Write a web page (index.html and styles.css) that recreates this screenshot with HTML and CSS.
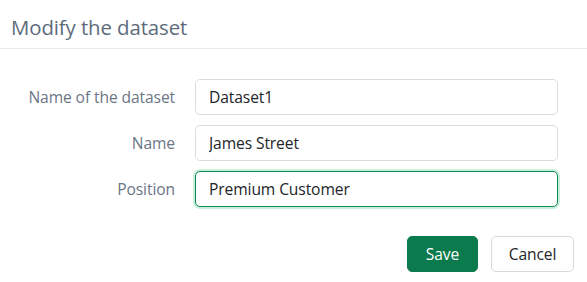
FILE: index.html
```html
<!DOCTYPE html>
<html>
<head>
<meta charset="utf-8">
<link rel="stylesheet" href="styles.css">
</head>
<body>
<div class="dialog">
  <div class="dialog-header">
    <h1 class="dialog-title">Modify the dataset</h1>
  </div>
  <form class="dialog-body">
    <label class="field-label" for="f1">Name of the dataset</label>
    <input class="field-input" id="f1" type="text" value="Dataset1">
    <label class="field-label" for="f2">Name</label>
    <input class="field-input" id="f2" type="text" value="James Street">
    <label class="field-label" for="f3">Position</label>
    <input class="field-input is-focused" id="f3" type="text" value="Premium Customer">
  </form>
  <div class="dialog-footer">
    <button class="btn btn-primary" type="button">Save</button>
    <button class="btn btn-secondary" type="button">Cancel</button>
  </div>
</div>
</body>
</html>
```
FILE: styles.css
```css
html, body {
  margin: 0;
  padding: 0;
  background: #ffffff;
}

body {
  font-family: "Open Sans", "Noto Sans", "Liberation Sans", sans-serif;
  width: 587px;
  height: 282px;
  overflow: hidden;
}

.dialog {
  width: 587px;
  height: 282px;
  box-sizing: border-box;
  display: flex;
  flex-direction: column;
}

.dialog-header {
  height: 49px;
  box-sizing: border-box;
  border-bottom: 1px solid #e7eaed;
  padding: 0 11px;
  display: flex;
  align-items: center;
}

.dialog-title {
  margin: 0;
  font-size: 20.4px;
  font-weight: 400;
  color: #5d6b7b;
  letter-spacing: -0.1px;
  position: relative;
  top: 3px;
}

.dialog-body {
  margin: 0;
  padding: 30px 29px 0 0;
  display: grid;
  grid-template-columns: 175px 1fr;
  column-gap: 20px;
  row-gap: 10px;
  align-items: center;
}

.field-label {
  text-align: right;
  font-size: 15.6px;
  color: #6b7685;
  letter-spacing: -0.1px;
}

.field-input {
  height: 36px;
  box-sizing: border-box;
  border: 1px solid #d9dde1;
  border-radius: 5px;
  padding: 0 13px;
  font-family: inherit;
  font-size: 15.6px;
  color: #222529;
  background: #fff;
  outline: none;
  letter-spacing: -0.1px;
}

.field-input.is-focused {
  border-color: #118a57;
  box-shadow: 0 0 0 2px #c9efdc;
}

.dialog-footer {
  display: flex;
  justify-content: flex-end;
  gap: 13px;
  padding: 29px 13px 0 0;
}

.btn {
  height: 36px;
  box-sizing: border-box;
  border-radius: 5px;
  font-family: inherit;
  font-size: 15.6px;
  padding: 0;
  cursor: pointer;
  letter-spacing: -0.1px;
}

.btn-primary {
  width: 71px;
  background: #0b7a4c;
  border: 1px solid #0b7a4c;
  color: #ffffff;
}

.btn-secondary {
  width: 83px;
  background: #ffffff;
  border: 1px solid #d6dade;
  color: #222529;
}
```
